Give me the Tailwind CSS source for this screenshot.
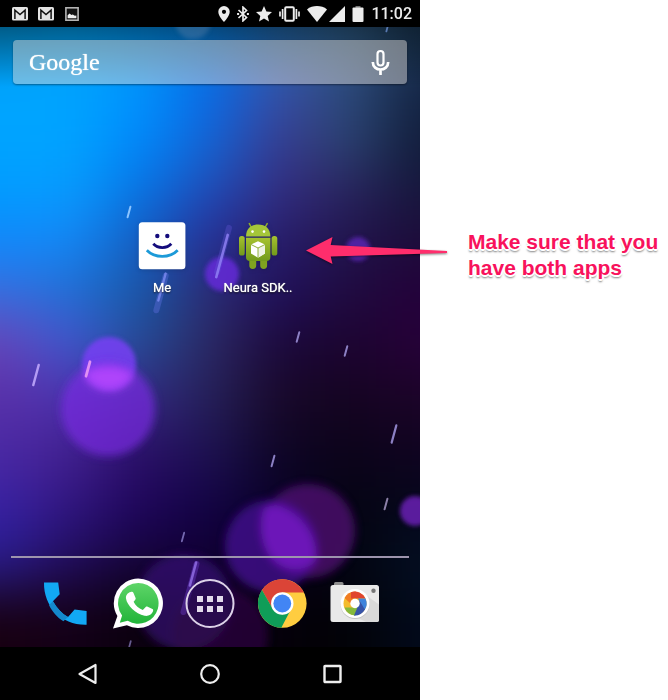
<!DOCTYPE html>
<html lang="en">
<head>
<meta charset="utf-8">
<meta name="viewport" content="width=device-width, initial-scale=1">
<title>Home screen</title>
<script src="https://cdn.jsdelivr.net/npm/@tailwindcss/browser@4"></script>
</head>
<body class="bg-white">
<main class="grid min-h-screen grid-cols-[105fr_62fr]">
  <section class="relative flex flex-col overflow-hidden bg-black font-['Roboto',sans-serif] text-white" aria-label="Phone home screen">
    <header class="relative z-10 flex h-[27px] items-center justify-between bg-black pr-2 pl-3">
      <div class="flex items-center gap-[10px] text-[#e4e4e4]">
        <svg class="h-[14px] w-4" viewBox="0 0 16 14"><rect width="16" height="13.6" rx="1.6" fill="currentColor"/><path d="M2.900 12V3.200L8 7.500l5.100-4.300V12" fill="none" stroke="#111" stroke-width="1.500"/></svg>
        <svg class="h-[14px] w-4" viewBox="0 0 16 14"><rect width="16" height="13.6" rx="1.6" fill="currentColor"/><path d="M2.900 12V3.200L8 7.500l5.100-4.300V12" fill="none" stroke="#111" stroke-width="1.500"/></svg>
        <svg class="h-[14px] w-4" viewBox="0 0 16 14"><rect x="1.900" y=".8" width="12.200" height="12.400" fill="#111" stroke="#b4b4b4" stroke-width="1.600"/><path d="M3.600 11.300V8.200l2-1.600 1.800 1.500 1.400-.6 2 1.200 1.600-.3v2.900z" fill="#eee"/></svg>
      </div>
      <div class="flex items-center gap-[7px] text-[#ececec]">
        <svg class="h-4 w-3" viewBox="0 0 12 16"><path fill="currentColor" fill-rule="evenodd" d="M6 0a5.700 5.700 0 0 0-5.700 5.700C.3 10 6 16 6 16s5.700-6 5.700-10.300A5.700 5.700 0 0 0 6 0zm0 3.700a2.100 2.100 0 1 1 0 4.200 2.100 2.100 0 0 1 0-4.200z"/></svg>
        <svg class="h-4 w-3" viewBox="0 0 12 16"><path d="M1.500 4l8 7.500L6 14.800V1.200l3.500 3.300-8 7.500" fill="none" stroke="currentColor" stroke-width="1.700"/><path d="M.1 7.100h2v1.800h-2zM9.900 7.100h2v1.800h-2z" fill="currentColor"/></svg>
        <svg class="h-4 w-4" viewBox="0 0 16 16"><path fill="currentColor" d="M8 0l2.400 5.500 5.600.4-4.300 4L13 15.500 8 12.500l-5 3 1.300-5.600-4.300-4 5.600-.4z"/></svg>
        <svg class="h-4 w-[21px]" viewBox="0 0 21 16"><rect x="6.200" y="1.300" width="8.600" height="13.400" rx="1" fill="none" stroke="currentColor" stroke-width="2"/><path d="M3.600 3v10M17.400 3v10M1 5.500v5M20 5.500v5" stroke="currentColor" stroke-width="1.700"/></svg>
        <div class="flex items-center gap-[2px]">
          <svg class="h-4 w-5" viewBox="0 0 20 16"><path fill="currentColor" d="M0 3.400C5.500-1 14.500-1 20 3.400L10 16z"/></svg>
          <svg class="h-4 w-4" viewBox="0 0 16 16"><path fill="currentColor" d="M16 0v16H0z"/></svg>
        </div>
        <svg class="h-4 w-3" viewBox="0 0 12 16"><path fill="#777" d="M3.500 0h5v2h-5z"/><rect x=".5" y="1.600" width="11" height="14.400" rx="1" fill="currentColor"/></svg>
        <time class="text-base leading-5 font-medium">11:02</time>
      </div>
    </header>

    <div class="relative flex grow flex-col">
      <svg class="absolute inset-0 h-full w-full" viewBox="0 27 420 620" preserveAspectRatio="none" aria-hidden="true">
        <defs>
          <filter id="mesh" x="-30%" y="-30%" width="160%" height="160%" color-interpolation-filters="sRGB"><feGaussianBlur stdDeviation="31 27"/></filter>
          <filter id="soft" x="-20%" y="-20%" width="140%" height="140%"><feGaussianBlur stdDeviation="2"/></filter>
          <filter id="softer" x="-20%" y="-20%" width="140%" height="140%"><feGaussianBlur stdDeviation="4"/></filter>
          <filter id="hair" x="-10%" y="-10%" width="120%" height="120%"><feGaussianBlur stdDeviation=".7"/></filter>
          <linearGradient id="topshade" x1="0" y1="0" x2="0" y2="1"><stop offset="0" stop-color="#000" stop-opacity=".4"/><stop offset="1" stop-color="#000" stop-opacity="0"/></linearGradient>
        </defs>
        <g id="wall" filter="url(#mesh)"></g>
        <rect y="27" width="420" height="60" fill="url(#topshade)"/>
        <g filter="url(#soft)">
          <circle cx="193" cy="21" r="18" fill="#8aa0c0" opacity=".25"/>
          <circle cx="109" cy="364" r="27" fill="#7840f4" opacity=".85"/>
          <circle cx="222" cy="274" r="17" fill="#6428d8" opacity=".85"/>
          <circle cx="358" cy="249" r="12" fill="#5c24b8" opacity=".8"/>
          <circle cx="415" cy="511" r="15" fill="#6a22b4" opacity=".85"/>
        </g>
        <g filter="url(#softer)">
          <circle cx="108" cy="409" r="47" fill="#7c2ce4" opacity=".68"/>
          <path d="M84 374c10-10 38-10 49 0-4 11-14 16-24 16s-21-6-25-16z" fill="#b848ff" opacity=".85"/>
          <circle cx="308" cy="531" r="47" fill="#551078" opacity=".72"/>
          <circle cx="271" cy="546" r="46" fill="#4a1098" opacity=".72"/>
          <path d="M263 510c8-16 55 8 54 50-12 13-34 12-46-2-9-12-13-32-8-48z" fill="#7a18c8" opacity=".75"/>
          <circle cx="184" cy="602" r="48" fill="#3e0f80" opacity=".6"/>
          <circle cx="220" cy="635" r="48" fill="#300a48" opacity=".6"/>
        </g>
        <g id="streaks" filter="url(#hair)" stroke-linecap="round"></g>
      </svg>

      <form class="relative mx-[13px] mt-[13px] flex h-11 items-center justify-between rounded-sm bg-[#e4e0dc]/46 pr-[17px] pl-4 shadow-[0_1px_2px_rgba(0,0,0,0.4)]" onsubmit="return false">
        <button type="button" class="font-['Liberation_Serif',serif] text-2xl leading-8 text-white [text-shadow:0_0_1px_white]">Google</button>
        <button type="button" aria-label="Voice search">
          <svg class="h-[26px] w-[19px]" viewBox="0 0 19 26" fill="none" stroke="#fff" stroke-width="2.200"><rect x="6.500" y="2" width="6" height="14.500" rx="3"/><path d="M1.800 13c0 10 15.400 10 15.400 0M9.500 20.500V26" stroke-width="2.700"/></svg>
        </button>
      </form>

      <nav class="relative mt-[138px] grid grid-cols-4 px-[18px] text-center text-[13px] leading-5" aria-label="Apps">
        <a href="#me" class="col-start-2 flex flex-col items-center gap-2 [text-shadow:0_0_1px_white,0_1px_2px_black]">
          <svg class="h-12 w-12 drop-shadow-sm" viewBox="0 0 48 48"><rect x=".8" y=".3" width="46.600" height="47" rx="3.500" fill="#fff"/><circle cx="19.300" cy="14" r="2.200" fill="#140c7c"/><circle cx="29.300" cy="14" r="2.200" fill="#140c7c"/><path d="M15.300 21.800c4.500 5 13.500 5 18 0" fill="none" stroke="#140c7c" stroke-width="2.800"/><path d="M8.800 28.200c8 8.200 22.900 8.200 30.900 0" fill="none" stroke="#1c9ad8" stroke-width="2.800"/></svg>
          <span>Me</span>
        </a>
        <a href="#neura" class="flex flex-col items-center gap-2 [text-shadow:0_0_1px_white,0_1px_2px_black]">
          <svg class="h-12 w-12 drop-shadow-sm" viewBox="0 0 48 48">
            <defs><linearGradient id="droid" x1="0" y1="0" x2="0" y2="1"><stop offset="0" stop-color="#a6c22f"/><stop offset="1" stop-color="#729a1c"/></linearGradient></defs>
            <path d="M17.500 5.500L15.300 1.600M31 5.500l2.200-3.900" stroke="#8fb02b" stroke-width="1.500" stroke-linecap="round"/>
            <path d="M15.300 34h6.900v9.500a3 3 0 0 1-6.900 0zM26.200 34h6.900v9.500a3 3 0 0 1-6.900 0z" fill="#7fa31f"/>
            <rect x="5" y="14" width="5.700" height="19.500" rx="2.600" fill="url(#droid)"/><rect x="37.600" y="14" width="5.700" height="19.500" rx="2.600" fill="url(#droid)"/>
            <path d="M12 14.500C12 6.500 17 2.500 24.200 2.500s12.200 4 12.200 12z" fill="#a5c639"/>
            <path d="M12 15.700h24.400V35a4 4 0 0 1-4 4H16a4 4 0 0 1-4-4z" fill="url(#droid)"/>
            <circle cx="18.500" cy="9.600" r="1.300" fill="#fff"/><circle cx="30" cy="9.600" r="1.300" fill="#fff"/>
            <path d="M24 19.200l7 3.300v9l-7 4.300-7-4.300v-9z" fill="#fff"/><path d="M24 26l7-3.500v9l-7 4.300z" fill="#eef2e4"/><path d="M17 22.500l7 3.500 7-3.500M24 26v9.800" fill="none" stroke="#87aa28" stroke-width=".9"/>
          </svg>
          <span class="whitespace-nowrap">Neura SDK..</span>
        </a>
      </nav>

      <div class="relative mt-auto pb-[17px]">
        <hr class="mx-[11px] h-[2px] border-0 bg-[#9d94ad]">
        <nav class="mt-[20px] grid grid-cols-5 justify-items-center px-[29px]" aria-label="Favorites">
          <a href="#phone" aria-label="Phone"><svg class="h-[52px] w-[52px]" viewBox="0 0 52 52"><path d="M5 4.500h14.200l1.500 11.700-6.800 7C18 30.500 23 35.500 29 39l6.600-7.400 12 1.500v13.700C23 47.500 4.500 29 5 4.500z" fill="#12a8f4"/><path d="M13.900 23.200C18 30.500 23 35.500 29 39l-4.600 4.200C18.500 40 13 33.500 10 27.100z" fill="#1488cc"/></svg></a>
          <a href="#whatsapp" aria-label="WhatsApp"><svg class="h-[52px] w-[52px]" viewBox="0 0 52 52"><defs><linearGradient id="wa" x1="0" y1="0" x2="0" y2="1"><stop offset="0" stop-color="#5ed568"/><stop offset="1" stop-color="#22b43a"/></linearGradient></defs><path d="M26.200.4a24.800 24.800 0 1 1-11.300 46.900L1 50.600l4.400-12.500A24.800 24.800 0 0 1 26.200.4z" fill="#fff"/><path d="M26.200 4.900a20.400 20.400 0 1 1-10.500 37.900L7.800 44.800l2.300-7.300A20.400 20.400 0 0 1 26.200 4.900z" fill="url(#wa)"/><path d="M18.700 14.100c1.600-.5 2.300-.2 2.800.8l2.100 5c.4 1-.3 1.800-2 3.900 2 4 5 6.600 9.200 8.200l2.900-3c.7-.6 1.200-.6 2-.2l4.700 2.300c.8.400 1 1 .5 2.500-1 3.300-5 4.800-8.300 4.200C23.500 35.900 15 27.600 14 20.600c-.4-3 1.500-5.800 4.700-6.500z" fill="#fff"/></svg></a>
          <a href="#all" aria-label="All apps"><svg class="h-[52px] w-[52px]" viewBox="0 0 52 52"><circle cx="26" cy="25.500" r="23.500" fill="#24084e" fill-opacity=".5" stroke="#ddd2e8" stroke-width="2"/><path d="M13 18h6v6h-6zM23 18h6v6h-6zM33 18h6v6h-6zM13 28h6v6h-6zM23 28h6v6h-6zM33 28h6v6h-6z" fill="#e4dcec"/></svg></a>
          <a href="#chrome" aria-label="Chrome"><svg class="h-[52px] w-[52px]" viewBox="0 0 52 52"><circle cx="26.300" cy="25.500" r="24.300" fill="#ffcd40"/><path d="M6 12.100A24.300 24.300 0 0 1 47.900 14.500H26.300L15.800 29.500z" fill="#db4437"/><path d="M6 12.100L16.800 31 26.300 36.500l7.500-3-8.500 16.300A24.300 24.300 0 0 1 6 12.100z" fill="#0f9d58"/><circle cx="26.300" cy="25.500" r="11.200" fill="#fff"/><circle cx="26.300" cy="25.500" r="8.900" fill="#4285f4"/></svg></a>
          <a href="#camera" aria-label="Camera"><svg class="h-[52px] w-[52px]" viewBox="0 0 52 52"><path d="M5 9V5.500A1.500 1.500 0 0 1 6.500 4h6.500a1.500 1.500 0 0 1 1.500 1.500V9z" fill="#8e8e8e"/><rect x="1.500" y="7" width="48.500" height="37" rx="2.500" fill="#e9e9e9"/><path d="M36 16.500l14 10v15a2.500 2.500 0 0 1-2.500 2.500H37L22 36.500z" fill="#d9d9d9"/><circle cx="44.500" cy="12.700" r="2.200" fill="#777"/><circle cx="26" cy="26.500" r="14.500" fill="#c4c4c4"/><circle cx="26" cy="25.500" r="14.500" fill="#fff"/>
          <g transform="translate(0 -.5)"><circle cx="26" cy="26" r="11.500" fill="#f4bc2c"/><path d="M15.500 20.500A12 12 0 0 1 27 14l-5.500 12z" fill="#f07c22"/><path d="M22 14.700A12 12 0 0 1 36.500 21H22z" fill="#e0452e"/><path d="M29 21h7.500A12 12 0 0 1 35.500 32.800z" fill="#3f84dc"/><path d="M30 23l6 9A12 12 0 0 1 25 38z" fill="#3754a8"/><path d="M31 30h-15.500A12 12 0 0 0 26 37.900z" fill="#84b93c"/><path d="M31 24l-6 14 3-.4 6-8z" fill="#3754a8"/></g><circle cx="26" cy="25.500" r="4.700" fill="#fff"/></svg></a>
        </nav>
      </div>
    </div>

    <footer class="relative grid h-[53px] grid-cols-3 place-items-center bg-black px-[27px]">
      <button type="button" aria-label="Back"><svg class="h-6 w-6" viewBox="0 0 24 24"><path d="M19.500 3v18L3.500 12z" fill="none" stroke="#eee" stroke-width="2.200" stroke-linejoin="round"/></svg></button>
      <button type="button" aria-label="Home"><svg class="h-6 w-6" viewBox="0 0 24 24"><circle cx="12" cy="12" r="8.800" fill="none" stroke="#eee" stroke-width="2.200"/></svg></button>
      <button type="button" aria-label="Recent apps"><svg class="h-6 w-6" viewBox="0 0 24 24"><rect x="4.500" y="4" width="16" height="16" rx=".6" fill="none" stroke="#eee" stroke-width="2.400"/></svg></button>
    </footer>
  </section>

  <aside class="relative pt-[229px] pl-12">
    <svg class="absolute top-[234px] -left-[115px] h-[34px] w-[144px] drop-shadow-[0_1px_1px_rgba(0,0,0,0.5)]" viewBox="0 0 144 34" aria-hidden="true"><path d="M1 16.500L27.500 3l-1.800 8L142 17v2L25.700 22.500l1.800 7.500z" fill="#ff2d6c"/></svg>
    <p class="font-['Liberation_Sans',sans-serif] text-[21px] leading-[26px] font-bold whitespace-nowrap text-[#f8125c] [text-shadow:-1px_-1px_1px_white,1px_-1px_1px_white,-1px_1px_1px_white,1px_1px_1px_white,0_2px_0_white,2px_0_0_white,-2px_0_0_white,0_3px_2px_rgba(0,0,0,0.5)]">Make sure that you<br>have both apps</p>
  </aside>
</main>
<script>
  // Wallpaper colours on a coarse grid, smoothed by the blur filter.
  const rows = [
    [-60, 60, '#0098e0 #00a0f0 #0090e8 #047cd8 #2068a8 #306088 #183450'],
    [60, 115, '#00a4ff #00a4ff #0094ff #0868e8 #3850a8 #2c4878 #142444'],
    [115, 165, '#00a4ff #00a4ff #0088fc #1464d4 #383c90 #2a4470 #101c38'],
    [165, 215, '#009cff #089cff #0874e4 #204cb8 #342c80 #28245c #16163c'],
    [215, 265, '#1088fc #1488f8 #145cc0 #282c94 #281c68 #20144c #1c0c38'],
    [265, 315, '#3870e0 #2070d4 #1858a8 #2c2c74 #20105c #200c40 #24003a'],
    [315, 370, '#6844b8 #4058d0 #244c94 #2c2864 #1c083c #1c0430 #28003a'],
    [370, 430, '#5830a8 #4c30ac #342880 #242058 #180828 #140420 #1c0428'],
    [430, 490, '#4828a4 #401e8c #280c64 #1c1050 #0c0424 #0a0418 #0e0420'],
    [490, 540, '#3420a4 #2c147c #1c0458 #100040 #080028 #040410 #04081c'],
    [540, 590, '#281c88 #200c58 #140434 #120034 #08001c #020410 #041024'],
    [590, 740, '#180010 #140018 #0a000c #0c0018 #040008 #020206 #020a1c']
  ];
  const ns = 'http://www.w3.org/2000/svg';
  const wall = document.getElementById('wall');
  for (const [top, bottom, colours] of rows) {
    colours.split(' ').forEach((fill, i) => {
      const r = document.createElementNS(ns, 'rect');
      const left = i === 0 ? -120 : i * 70 - 35;
      const right = i === 6 ? 540 : i * 70 + 36;
      r.setAttribute('x', left); r.setAttribute('y', top);
      r.setAttribute('width', right - left); r.setAttribute('height', bottom - top + 1);
      r.setAttribute('fill', fill);
      wall.append(r);
    });
  }
  // Light streaks: centre x, centre y, length, width, colour.
  const streaks = [
    [129,212,11,2,'#8cc4ff'],[223,250,46,6,'#6458d855'],[222,256,44,2.6,'#9484f8cc'],[161,293,36,6,'#6070e066'],[162,287,28,2.4,'#8490f8bb'],
    [36,375,21,2.4,'#b49cf4'],[88,369,15,2.8,'#e090f4'],[298,337,10,2,'#8c80c4'],[346,351,10,2,'#8c80c4'],[394,434,18,2.2,'#8c80c4'],
    [273,461,11,2,'#8c80c4'],[386,504,11,2,'#8c80a8'],[183,537,9,1.8,'#7468b0'],[190,588,50,6,'#7040d066'],[193,574,24,2.6,'#9470e8cc'],[130,644,6,1.8,'#685c90'],[387,29,5,1.8,'#5878b0']
  ];
  const layer = document.getElementById('streaks');
  for (const [x, y, len, w, stroke] of streaks) {
    const l = document.createElementNS(ns, 'line');
    const dx = len * 0.13, dy = len * 0.48;
    l.setAttribute('x1', x + dx); l.setAttribute('y1', y - dy);
    l.setAttribute('x2', x - dx); l.setAttribute('y2', y + dy);
    l.setAttribute('stroke', stroke); l.setAttribute('stroke-width', w);
    layer.append(l);
  }
</script>
</body>
</html>
